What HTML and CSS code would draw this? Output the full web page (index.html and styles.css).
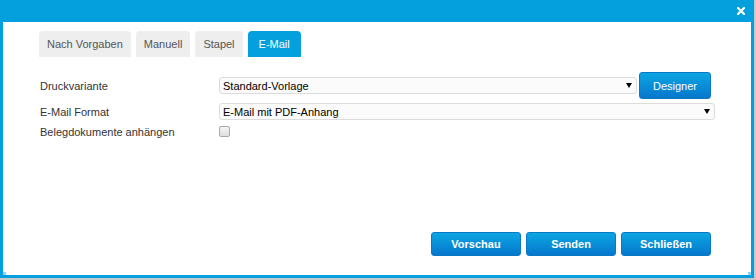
FILE: index.html
```html
<!DOCTYPE html>
<html lang="de">
<head>
    <meta charset="UTF-8">
    <meta name="viewport" content="width=device-width, initial-scale=1.0">
    <title>Drucken</title>
    <link rel="stylesheet" href="styles.css">
</head>
<body>

    <div class="dialog">
        <div class="titlebar">
            <span class="close" title="Schließen">
                <svg width="8" height="8" viewBox="0 0 8 8">
                    <path d="M1 1 L7 7 M7 1 L1 7" stroke="#fff" stroke-width="2.2" stroke-linecap="square"/>
                </svg>
            </span>
        </div>

        <div class="content">
            <ul class="tabs">
                <li class="tab">Nach Vorgaben</li>
                <li class="tab">Manuell</li>
                <li class="tab">Stapel</li>
                <li class="tab active">E-Mail</li>
            </ul>

            <div class="form">
                <div class="row row-first">
                    <label>Druckvariante</label>
                    <div class="field">
                        <div class="select select-short">
                            <span>Standard-Vorlage</span>
                            <span class="arrow"></span>
                        </div>
                        <button class="btn btn-designer">Designer</button>
                    </div>
                </div>
                <div class="row row-second">
                    <label>E-Mail Format</label>
                    <div class="field">
                        <div class="select select-long">
                            <span>E-Mail mit PDF-Anhang</span>
                            <span class="arrow"></span>
                        </div>
                    </div>
                </div>
                <div class="row row-third">
                    <label>Belegdokumente anhängen</label>
                    <div class="field">
                        <span class="checkbox"></span>
                    </div>
                </div>
            </div>

            <div class="footer">
                <button class="btn btn-bold">Vorschau</button>
                <button class="btn btn-bold">Senden</button>
                <button class="btn btn-bold">Schließen</button>
            </div>
        </div>

        <span class="grip grip-left"></span>
        <span class="grip grip-right"></span>
    </div>

</body>
</html>
```

FILE: styles.css
```css
body {
    margin: 0;
    background-color: #c3c9cc;
    font-family: "Liberation Sans", Arial, sans-serif;
    font-size: 11px;
    color: #333;
}
.dialog {
    position: relative;
    width: 754px;
    height: 278px;
    box-sizing: border-box;
    border: 3px solid #049fdd;
    border-top: 0;
    background-color: #fff;
    display: flex;
    flex-direction: column;
}
.titlebar {
    height: 22px;
    margin: 0 -3px;
    background-color: #049fdd;
    display: flex;
    justify-content: flex-end;
    align-items: center;
    padding-right: 9px;
}
.close {
    display: flex;
    width: 8px;
    height: 8px;
    margin-top: -1px;
    cursor: pointer;
}
.content {
    flex: 1;
    display: flex;
    flex-direction: column;
    padding: 9px 40px 19px 36px;
}
.tabs {
    list-style: none;
    margin: 0;
    padding: 0;
    display: flex;
    height: 26px;
}
.tab {
    display: flex;
    align-items: center;
    padding: 0 8px;
    margin-right: 5px;
    background-color: #eeeeee;
    color: #555;
    border-radius: 4px 4px 0 0;
    cursor: pointer;
}
.tab.active {
    padding: 0 11px;
    background-color: #049fdd;
    color: #fff;
}
.form {
    margin-top: 15px;
}
.row {
    display: grid;
    grid-template-columns: 180px 1fr;
    align-items: center;
}
.row label {
    padding-left: 1px;
}
.row-first {
    height: 27px;
}
.row-second {
    height: 17px;
    margin-top: 4px;
}
.row-third {
    height: 19px;
    margin-top: 2px;
}
.field {
    display: flex;
    align-items: center;
}
.select {
    height: 17px;
    box-sizing: border-box;
    border: 1px solid #dcdcdc;
    border-radius: 3px;
    background-color: #fbfbfb;
    color: #000;
    display: flex;
    align-items: center;
    justify-content: space-between;
    padding: 0 4px 0 3px;
}
.select-short {
    width: 418px;
}
.select-long {
    width: 496px;
}
.arrow {
    width: 0;
    height: 0;
    border-left: 3px solid transparent;
    border-right: 3px solid transparent;
    border-top: 5px solid #000;
}
.checkbox {
    width: 9px;
    height: 9px;
    border: 1px solid #a9a9a9;
    border-radius: 2px;
    background: linear-gradient(#f4f4f4, #dedede);
}
.btn {
    font-family: "Liberation Sans", Arial, sans-serif;
    font-size: 11px;
    color: #fff;
    border: 1px solid #0a78c4;
    border-radius: 3px;
    background: linear-gradient(#0ba6e3, #0677cc);
    cursor: pointer;
    padding: 0;
}
.btn-designer {
    width: 72px;
    height: 27px;
    margin-left: 2px;
}
.footer {
    margin-top: auto;
    display: flex;
    justify-content: flex-end;
    gap: 5px;
}
.btn-bold {
    width: 90px;
    height: 24px;
    font-weight: bold;
}
.grip {
    position: absolute;
    bottom: 0;
    width: 3px;
    height: 3px;
    background-color: #8fd2f2;
}
.grip-left {
    left: 0;
}
.grip-right {
    right: 0;
}
```
